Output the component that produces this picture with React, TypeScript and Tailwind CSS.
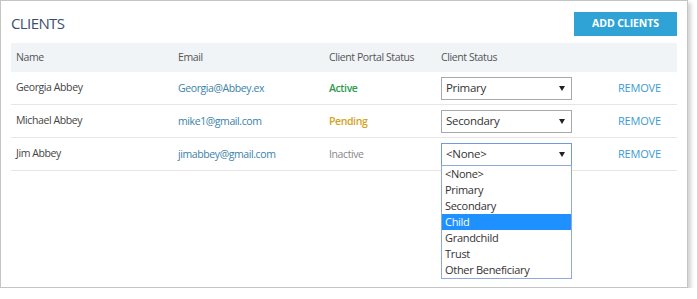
const ROWS = [
  { name: 'Georgia Abbey', email: 'Georgia@Abbey.ex', portal: 'Active', status: 'Primary' },
  { name: 'Michael Abbey', email: 'mike1@gmail.com', portal: 'Pending', status: 'Secondary' },
  { name: 'Jim Abbey', email: 'jimabbey@gmail.com', portal: 'Inactive', status: '<None>' },
];

const OPTIONS = ['<None>', 'Primary', 'Secondary', 'Child', 'Grandchild', 'Trust', 'Other Beneficiary'];

const PORTAL_COLORS: Record<string, string> = {
  Active: 'text-[#2f9a4f] font-semibold',
  Pending: 'text-[#d2a21c] font-semibold',
  Inactive: 'text-[#888]',
};

function Caret() {
  return (
    <svg width="6" height="5" viewBox="0 0 6 5" className="shrink-0">
      <path d="M0 0h6L3 5z" fill="#222" />
    </svg>
  );
}

function StatusSelect({ value, open }: { value: string; open?: boolean }) {
  return (
    <div className="relative w-[131px]">
      <div
        className={`flex h-[23px] items-center justify-between bg-white pl-[4px] pr-[6px] text-[11.5px] tracking-[-0.3px] text-[#333] ${
          open ? 'border border-[#6f9be0]' : 'border border-[#a9a9a9]'
        }`}
      >
        <span>{value}</span>
        <Caret />
      </div>
      {/* open dropdown list hangs under the focused select */}
      {open && (
        <ul className="absolute left-0 top-[22px] z-10 w-[131px] border border-[#8fa9dc] bg-white text-[11px] leading-[16px] tracking-[-0.3px] text-[#333]">
          {OPTIONS.map((o) => (
            <li key={o} className={`px-[3px] ${o === 'Child' ? 'bg-[#1e90ff] text-white' : ''}`}>
              {o}
            </li>
          ))}
        </ul>
      )}
    </div>
  );
}

export default function App() {
  return (
    <div className="bg-white" style={{ fontFamily: '"Open Sans", "Noto Sans", sans-serif' }}>
      <div className="h-[288px] w-[688px] border border-[#c4c4c4] bg-white px-[10px] shadow-[3px_3px_4px_rgba(0,0,0,0.18)]">
        <div className="flex items-start justify-between pt-[11px]">
          <h1 className="mt-[1px] text-[15px] leading-[20px] tracking-[-0.6px] text-[#3b4f6d]">CLIENTS</h1>
          <button className="h-[24px] w-[103px] bg-[#2fa3d6] text-[10.5px] font-bold tracking-[-0.1px] text-white">
            ADD CLIENTS
          </button>
        </div>

        <div className="mt-[7px] text-[10.5px] tracking-[-0.4px]">
          <div className="flex h-[29px] items-center bg-[#f0f4f7] text-[#555]">
            <div className="w-[162px] pl-[5px]">Name</div>
            <div className="w-[152px] pl-[5px]">Email</div>
            <div className="w-[111px] pl-[4px]">Client Portal Status</div>
            <div className="pl-[5px]">Client Status</div>
          </div>
          {ROWS.map((r, i) => (
            <div key={r.name} className="flex h-[33px] items-center border-b border-[#e6e6e6]">
              <div className="w-[162px] pl-[5px] text-[#444]">{r.name}</div>
              <div className="w-[152px] pl-[5px] pt-[2px] text-[#3a82a8]">{r.email}</div>
              <div className={`w-[114px] pl-[4px] pt-[2px] ${PORTAL_COLORS[r.portal]}`}>{r.portal}</div>
              <div className="pl-[2px]">
                <StatusSelect value={r.status} open={i === 2} />
              </div>
              <div className="ml-[46px] text-[11px] tracking-[-0.2px] text-[#3a9bd0]">REMOVE</div>
            </div>
          ))}
        </div>
      </div>
    </div>
  );
}
